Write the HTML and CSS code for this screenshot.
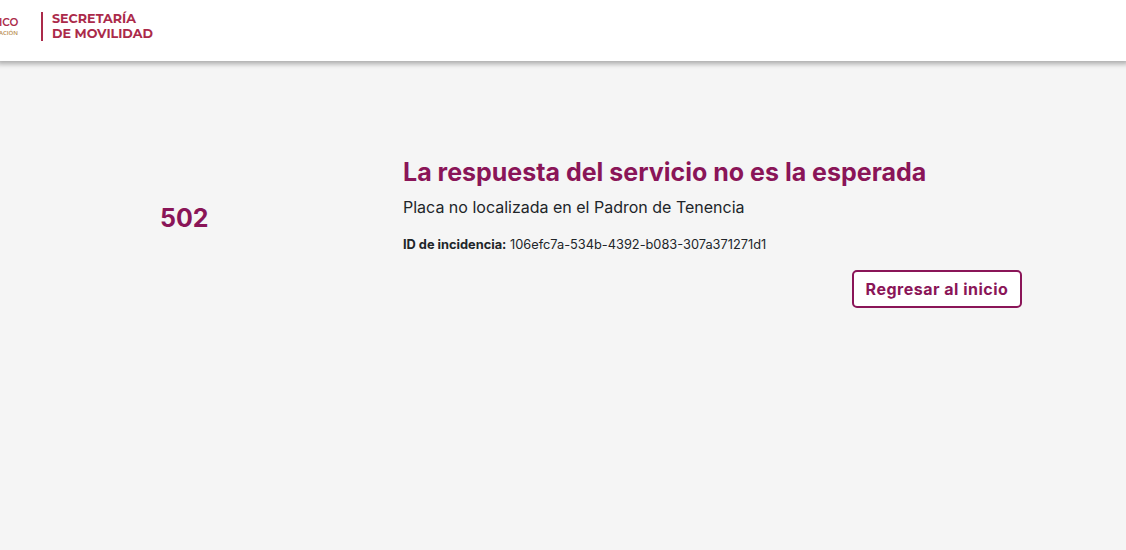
FILE: index.html
```html
<!DOCTYPE html>
<html lang="es">
<head>
<meta charset="utf-8">
<title>Secretaría de Movilidad</title>
<link rel="stylesheet" href="styles.css">
</head>
<body>
<header class="header">
  <div class="state"><span class="state-name">ICO</span><span class="state-sub">ACIÓN</span></div>
  <div class="agency"><span class="agency-top">SECRETARÍA</span><span class="agency-bottom">DE MOVILIDAD</span></div>
</header>
<main class="main">
  <div class="code">502</div>
  <section class="detail">
    <h1 class="title">La respuesta del servicio no es la esperada</h1>
    <p class="message">Placa no localizada en el Padron de Tenencia</p>
    <p class="incident"><b>ID de incidencia:</b> 106efc7a-534b-4392-b083-307a371271d1</p>
    <div class="actions"><button class="button">Regresar al inicio</button></div>
  </section>
</main>
</body>
</html>
```
FILE: styles.css
```css
* { box-sizing: border-box; }
body { margin: 0; height: 550px; overflow: hidden; background: #f5f5f5; color: #212529; font-family: Inter, sans-serif; }
.header { display: flex; height: 61px; padding-top: 12px; background: #fff; box-shadow: 0 0 5px 3px rgba(0,0,0,.3); font-family: Montserrat, "Open Sans", sans-serif; color: #ab2a4a; }
.state { width: 41px; padding-top: 4px; display: flex; flex-direction: column; }
.state-name { margin-left: -1px; font-size: 10.5px; line-height: 13px; font-weight: 600; }
.state-sub { margin-left: -1px; font-family: "Open Sans", sans-serif; font-size: 6px; line-height: 9px; color: #b88d4c; font-weight: 600; }
.agency { display: flex; flex-direction: column; height: 29px; padding-left: 9px; border-left: 2px solid #ab2a4a; font-size: 12.7px; line-height: 15px; font-weight: 700; white-space: nowrap; }
.agency-top { margin-top: -1px; }
.main { display: flex; padding-top: 96px; }
.code { width: 403px; padding: 45px 0 0 160px; color: #8a1558; font-size: 25px; line-height: 32px; font-weight: 700; }
.detail { width: 619px; }
.title { margin: 0; color: #8a1558; font-size: 25px; line-height: 31px; font-weight: 700; white-space: nowrap; }
.message { margin: 7px 0 0; font-size: 16px; line-height: 24px; }
.incident { margin: 16px 0 0; font-size: 12.8px; line-height: 19px; }
.actions { display: flex; justify-content: flex-end; margin-top: 16px; }
.button { width: 170px; height: 38px; padding: 0; border: 2px solid #8a1558; border-radius: 5px; background: #fff; color: #8a1558; font: 700 16px Inter, sans-serif; letter-spacing: .5px; }
```
